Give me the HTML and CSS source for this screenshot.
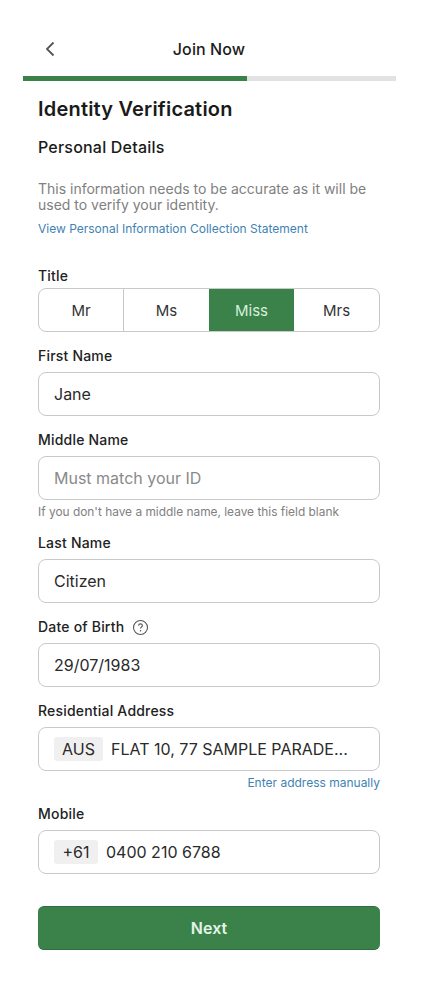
FILE: index.html
```html
<!DOCTYPE html>
<html lang="en">
<head>
<meta charset="utf-8">
<title>Join Now</title>
<link rel="stylesheet" href="styles.css">
</head>
<body>
<div class="page">
  <header class="topbar">
    <svg class="back" width="12" height="18" viewBox="0 0 12 18"><path d="M9.5 2.5 L3 9 L9.5 15.5" fill="none" stroke="#555" stroke-width="1.8"/></svg>
    <span class="topbar-title">Join Now</span>
  </header>
  <div class="progress"><div class="progress-fill"></div></div>
  <main class="content">
    <h1 class="title">Identity Verification</h1>
    <h2 class="subtitle">Personal Details</h2>
    <p class="intro">This information needs to be accurate as it will be used to verify your identity.</p>
    <a class="link statement">View Personal Information Collection Statement</a>

    <div class="label label-title">Title</div>
    <div class="segments">
      <div class="segment divided">Mr</div>
      <div class="segment">Ms</div>
      <div class="segment active">Miss</div>
      <div class="segment">Mrs</div>
    </div>

    <div class="label label-first">First Name</div>
    <div class="field">Jane</div>

    <div class="label label-next">Middle Name</div>
    <div class="field placeholder">Must match your ID</div>
    <div class="hint">If you don't have a middle name, leave this field blank</div>

    <div class="label label-last">Last Name</div>
    <div class="field">Citizen</div>

    <div class="label label-next label-icon">Date of Birth
      <svg width="17" height="17" viewBox="0 0 16 16"><circle cx="8" cy="8" r="6.6" fill="none" stroke="#555" stroke-width="1"/><path d="M6.2 6.4 C6.2 5.2 7 4.6 8 4.6 C9 4.6 9.8 5.3 9.8 6.2 C9.8 7.5 8 7.6 8 9" fill="none" stroke="#555" stroke-width="1"/><circle cx="8" cy="11" r="0.7" fill="#555"/></svg>
    </div>
    <div class="field">29/07/1983</div>

    <div class="label label-next">Residential Address</div>
    <div class="field"><span class="tag tag-country">AUS</span><span class="address">FLAT 10, 77 SAMPLE PARADE...</span></div>
    <div class="manual"><a class="link">Enter address manually</a></div>

    <div class="label label-mobile">Mobile</div>
    <div class="field"><span class="tag tag-dial">+61</span><span>0400 210 6788</span></div>

    <button class="next" type="button">Next</button>
  </main>
</div>
</body>
</html>
```
FILE: styles.css
```css
* { box-sizing: border-box; }
html, body { margin: 0; padding: 0; background: #fff; }
body { font-family: Inter, "Liberation Sans", sans-serif; color: #1c1c1c; }
.page { width: 425px; height: 996px; padding: 0 29px 0 23px; overflow: hidden; }
.topbar { height: 76px; padding-top: 39px; position: relative; display: flex; justify-content: center; }
.topbar-title { font-size: 16px; line-height: 20px; font-weight: 500; letter-spacing: 0.1px; margin-left: -1px; }
.back { position: absolute; left: 21px; top: 40px; }
.progress { height: 5px; background: #e2e2e2; }
.progress-fill { width: 224px; height: 100%; background: #3a824a; }
.content { padding: 0 16px 0 15px; }
.title { margin: 15px 0 0; font-size: 20px; line-height: 26px; font-weight: 600; letter-spacing: 0.2px; color: #1a1a1a; }
.subtitle { margin: 15px 0 0; font-size: 16px; line-height: 20px; font-weight: 500; letter-spacing: 0.2px; color: #1a1a1a; }
.intro { margin: 24px 0 0; font-size: 14px; line-height: 16px; color: #808080; }
.link { color: #3f83b4; font-size: 12px; line-height: 16px; }
.statement { display: block; margin-top: 8px; }
.label { font-size: 14px; line-height: 18px; font-weight: 500; letter-spacing: 0.2px; color: #222; }
.label-title { margin-top: 30px; }
.label-first { margin-top: 15px; }
.label-next { margin-top: 15px; }
.label-last { margin-top: 14px; }
.label-mobile { margin-top: 14px; }
.label-title + .segments { margin-top: 3px; }
.label-first + .field, .label-next + .field, .label-last + .field, .label-mobile + .field { margin-top: 7px; }
.label-icon { display: flex; align-items: center; gap: 8px; }
.segments { display: grid; grid-template-columns: repeat(4, 1fr); height: 44px; border: 1px solid #c9c9c9; border-radius: 8px; overflow: hidden; }
.segment { display: flex; align-items: center; justify-content: center; font-size: 15px; color: #333; }
.divided { border-right: 1px solid #c9c9c9; }
.active { background: #3a824a; color: #d6f0da; }
.field { height: 44px; border: 1px solid #c9c9c9; border-radius: 8px; padding: 0 15px; display: flex; align-items: center; font-size: 16px; color: #2a2a2a; }
.placeholder { color: #8a8a8a; }
.hint { margin-top: 4px; font-size: 11.9px; line-height: 16px; color: #808080; }
.tag { flex: none; background: #f0f0f0; border-radius: 3px; height: 24px; display: flex; align-items: center; justify-content: center; }
.tag-country { width: 49px; margin-right: 8px; }
.tag-dial { width: 44px; margin-right: 8px; }
.address { white-space: nowrap; }
.manual { margin-top: 2px; text-align: right; line-height: 16px; }
.next { display: block; width: 100%; height: 44px; margin-top: 32px; border: 0; border-bottom: 1px solid #2f6e3e; border-top: 1px solid #2f6e3e; border-radius: 6px; background: #3a824a; color: #e3f5e6; font-family: inherit; font-size: 16px; font-weight: 600; }
```
